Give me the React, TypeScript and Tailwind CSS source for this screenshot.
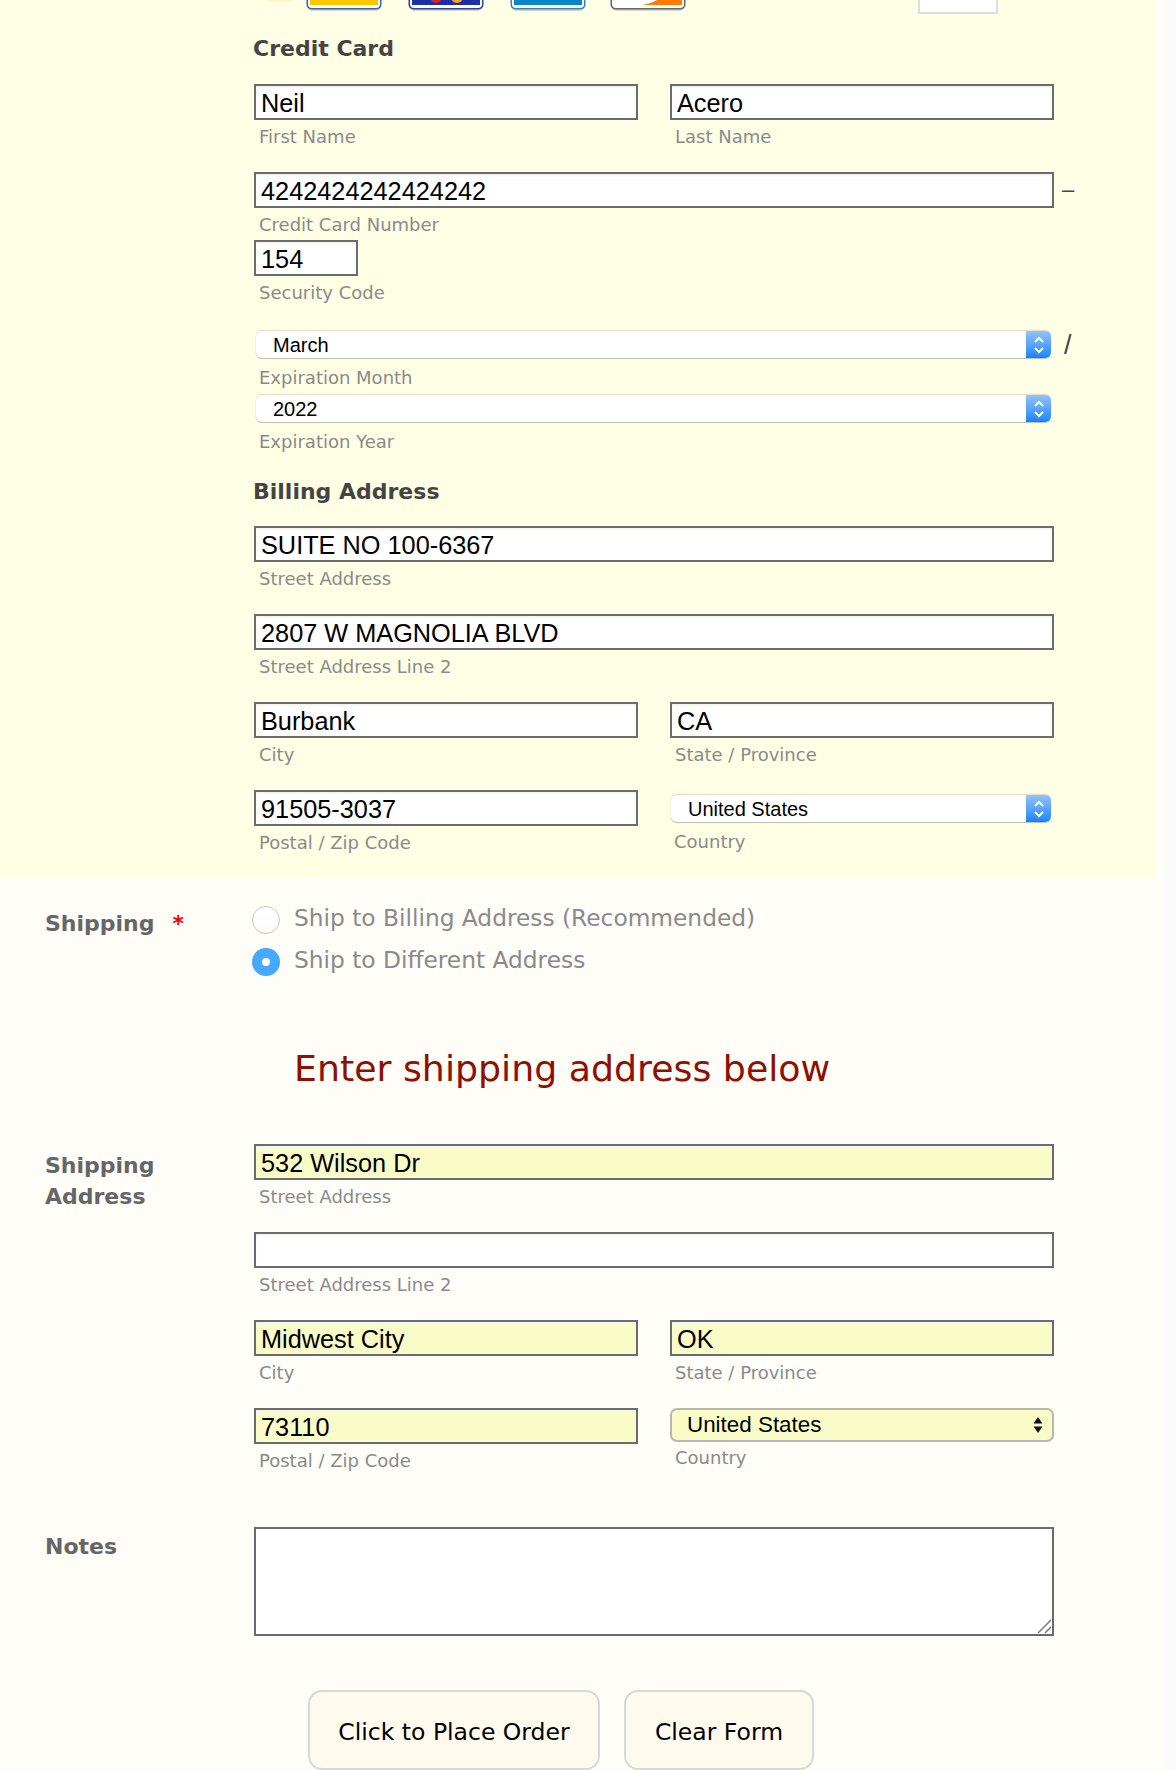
const field = "box-border h-9 w-full border-2 border-[#6b6b6b] px-[5px] pt-[2px] text-[25.3px] leading-none text-black outline-none shadow-[inset_0_2px_2px_#f4f4f0] font-['Liberation_Sans',sans-serif]"
const sans = "font-['DejaVu_Sans',sans-serif]"

function CardEdge({ edge, fill, className, children }: { edge: string; fill: string; className: string; children?: React.ReactNode }) {
  return (
    <svg className={className} width="76" height="14" viewBox="0 0 76 14" aria-hidden="true">
      <rect x="1" y="-12" width="74" height="23" rx="5" fill="#d8d8cc" />
      <rect x="0.5" y="-12" width="75" height="21.5" rx="5" fill={edge} />
      <rect x="2" y="-12" width="72" height="20" rx="4" fill="#fff" />
      <rect x="4" y="-12" width="68" height="17" fill={fill} />
      {children}
    </svg>
  )
}

function Cards() {
  return (
    <div className="relative flex h-[14px] items-start overflow-hidden">
      <div className="ml-[13px] h-[2px] w-[26px] rounded-b-full bg-[#fff6c4]" />
      <CardEdge className="ml-[13px]" edge="#3c62a8" fill="#ffc600" />
      <CardEdge className="ml-[26px]" edge="#2d3f96" fill="#1b2fa8">
        <circle cx="28" cy="-3" r="6" fill="#d9262c" />
        <circle cx="49" cy="-3" r="6" fill="#f5a623" />
      </CardEdge>
      <CardEdge className="ml-[26px]" edge="#3d80b8" fill="#0a86c8" />
      <CardEdge className="ml-[24px]" edge="#666" fill="#fff">
        <path d="M32 5 L72 5 L72 -2 L50 -2 Q44 3 32 5 Z" fill="#ff7a00" />
      </CardEdge>
      <div className="absolute left-[664px] top-0 h-[14px] w-[80px] border-2 border-t-0 border-[#ddd] bg-white" />
    </div>
  )
}

function Caption({ children, className = '' }: { children: React.ReactNode; className?: string }) {
  return <div className={`${sans} whitespace-nowrap text-[18px] leading-[20px] text-[#8a8a8a] ${className}`}>{children}</div>
}

function Heading({ children, className = '' }: { children: React.ReactNode; className?: string }) {
  return <div className={`${sans} -ml-px text-[22px] font-bold leading-[28px] text-[#444] ${className}`}>{children}</div>
}

function Field({ value, label, bg = 'bg-white', className = '' }: { value: string; label: string; bg?: string; className?: string }) {
  return (
    <div className={className}>
      <input readOnly value={value} className={`${field} ${bg} block`} />
      <Caption className="mt-[7px] pl-[5px]">{label}</Caption>
    </div>
  )
}

function AquaSelect({ value, label, className = '' }: { value: string; label: string; className?: string }) {
  return (
    <div className={className}>
      <div className="box-border flex h-7 items-center overflow-hidden rounded-[6px] border-t border-[#e2e0c8] bg-white pl-[17px] shadow-[0_1px_1px_#bdbbaa,0_0_1px_#cfcdb8]">
        <span className="flex-1 font-['Liberation_Sans',sans-serif] text-[20px] leading-none text-black">{value}</span>
        <span className="flex h-full w-[25px] items-center justify-center bg-gradient-to-b from-[#8fc2ff] to-[#0a84ff]">
          <svg width="12" height="20" viewBox="0 0 12 20" fill="none" stroke="#fff" strokeWidth="2" aria-hidden="true">
            <path d="M2 7 L6 3 L10 7" />
            <path d="M2 13 L6 17 L10 13" />
          </svg>
        </span>
      </div>
      <Caption className="mt-[10px] pl-[3px]">{label}</Caption>
    </div>
  )
}

function Radio({ checked }: { checked?: boolean }) {
  if (checked) {
    return (
      <span className="flex h-7 w-7 items-center justify-center rounded-full bg-[#45a9ff]">
        <span className="h-2 w-2 rounded-full bg-white" />
      </span>
    )
  }
  return <span className="box-border h-7 w-7 rounded-full border border-[#c8c8c8] bg-gradient-to-b from-white to-[#fbfbf9]" />
}

export default function App() {
  return (
    <div className="flex h-[1770px] w-[1176px] overflow-hidden bg-[#fafaf8]">
      <div className="h-full w-[1164px] bg-[#fffdf7]">
        <div className="box-border h-[878px] w-[1156px] bg-[#ffffe6] pl-[254px]">
          <Cards />
          <Heading className="mt-[21px]">Credit Card</Heading>
          <div className="mt-[21px] flex w-[800px] gap-[32px]">
            <Field value="Neil" label="First Name" className="w-[384px]" />
            <Field value="Acero" label="Last Name" className="w-[384px]" />
          </div>
          <div className="mt-[25px] flex w-[830px] items-start">
            <Field value="4242424242424242" label="Credit Card Number" className="w-[800px]" />
            <span className="ml-[8px] mt-[2px] text-[22px] leading-[32px] font-['Liberation_Sans',sans-serif] text-[#444]">–</span>
          </div>
          <Field value="154" label="Security Code" className="mt-[5px] w-[104px]" />
          <div className="mt-[27px] flex w-[830px] items-start">
            <AquaSelect value="March" label="Expiration Month" className="ml-[2px] w-[795px]" />
            <span className="ml-[13px] text-[27px] leading-[30px] font-['Liberation_Sans',sans-serif] text-[#444]">/</span>
          </div>
          <AquaSelect value="2022" label="Expiration Year" className="ml-[2px] mt-[6px] w-[795px]" />
          <Heading className="mt-[26px]">Billing Address</Heading>
          <Field value="SUITE NO 100-6367" label="Street Address" className="mt-[20px] w-[800px]" />
          <Field value="2807 W MAGNOLIA BLVD" label="Street Address Line 2" className="mt-[25px] w-[800px]" />
          <div className="mt-[25px] flex w-[800px] gap-[32px]">
            <Field value="Burbank" label="City" className="w-[384px]" />
            <Field value="CA" label="State / Province" className="w-[384px]" />
          </div>
          <div className="mt-[25px] flex w-[800px] gap-[32px]">
            <Field value="91505-3037" label="Postal / Zip Code" className="w-[384px]" />
            <AquaSelect value="United States" label="Country" className="ml-[1px] mt-[4px] w-[380px]" />
          </div>
        </div>

        <div className="flex pt-[28px]">
          <div className="w-[252px] pl-[45px] pt-[4px]">
            <div className={`${sans} flex text-[22px] font-bold leading-[28px] text-[#666]`}>
              Shipping
              <span className="ml-[18px] font-bold text-[#f00]">*</span>
            </div>
          </div>
          <div className="flex flex-col gap-[14px]">
            <div className="flex items-center gap-[14px]">
              <Radio />
              <span className={`${sans} -mt-[4px] text-[23.3px] leading-[28px] text-[#8a8a8a]`}>Ship to Billing Address (Recommended)</span>
            </div>
            <div className="flex items-center gap-[14px]">
              <Radio checked />
              <span className={`${sans} -mt-[4px] text-[23.3px] leading-[28px] text-[#8a8a8a]`}>Ship to Different Address</span>
            </div>
          </div>
        </div>

        <div className={`${sans} mt-[71px] pl-[294px] text-[36.3px] leading-[44px] text-[#900f00]`}>Enter shipping address below</div>

        <div className="mt-[53px] flex">
          <div className={`${sans} w-[254px] pl-[45px] pt-[6px] text-[22px] font-bold leading-[31px] text-[#666]`}>
            Shipping<br />Address
          </div>
          <div className="w-[800px]">
            <Field value="532 Wilson Dr" label="Street Address" bg="bg-[#fafcc8]" />
            <Field value="" label="Street Address Line 2" className="mt-[25px]" />
            <div className="mt-[25px] flex gap-[32px]">
              <Field value="Midwest City" label="City" bg="bg-[#fafcc8]" className="w-[384px]" />
              <Field value="OK" label="State / Province" bg="bg-[#fafcc8]" className="w-[384px]" />
            </div>
            <div className="mt-[25px] flex gap-[32px]">
              <Field value="73110" label="Postal / Zip Code" bg="bg-[#fafcc8]" className="w-[384px]" />
              <div className="w-[384px]">
                <div className="box-border flex h-[34px] items-center rounded-[7px] border-2 border-[#b8b8b0] bg-[#fafcc8] pl-[15px] pr-[9px]">
                  <span className="flex-1 font-['Liberation_Sans',sans-serif] text-[22.4px] leading-none text-black">United States</span>
                  <svg width="10" height="18" viewBox="0 0 10 18" fill="#111" aria-hidden="true">
                    <path d="M5 1 L9.5 7.5 L0.5 7.5 Z" />
                    <path d="M5 17 L9.5 10.5 L0.5 10.5 Z" />
                  </svg>
                </div>
                <Caption className="mt-[6px] pl-[5px]">Country</Caption>
              </div>
            </div>
          </div>
        </div>

        <div className="mt-[56px] flex">
          <div className={`${sans} w-[254px] pl-[45px] pt-[6px] text-[22px] font-bold leading-[28px] text-[#666]`}>Notes</div>
          <div className="relative box-border h-[109px] w-[800px] border-2 border-[#6b6b6b] bg-white">
            <svg className="absolute bottom-0 right-0" width="16" height="16" viewBox="0 0 16 16" stroke="#777" strokeWidth="1.5" aria-hidden="true">
              <path d="M2 15 L15 2" />
              <path d="M9 15 L15 9" />
            </svg>
          </div>
        </div>

        <div className="mt-[54px] flex gap-[24px] pl-[308px]">
          <button type="button" className={`${sans} box-border h-[80px] w-[292px] rounded-[14px] border-2 border-[#d8d8d8] bg-[#fffaee] pt-[5px] text-[23.5px] text-black`}>Click to Place Order</button>
          <button type="button" className={`${sans} box-border h-[80px] w-[190px] rounded-[14px] border-2 border-[#d8d8d8] bg-[#fffaee] pt-[5px] text-[23.5px] text-black`}>Clear Form</button>
        </div>
      </div>
    </div>
  )
}
